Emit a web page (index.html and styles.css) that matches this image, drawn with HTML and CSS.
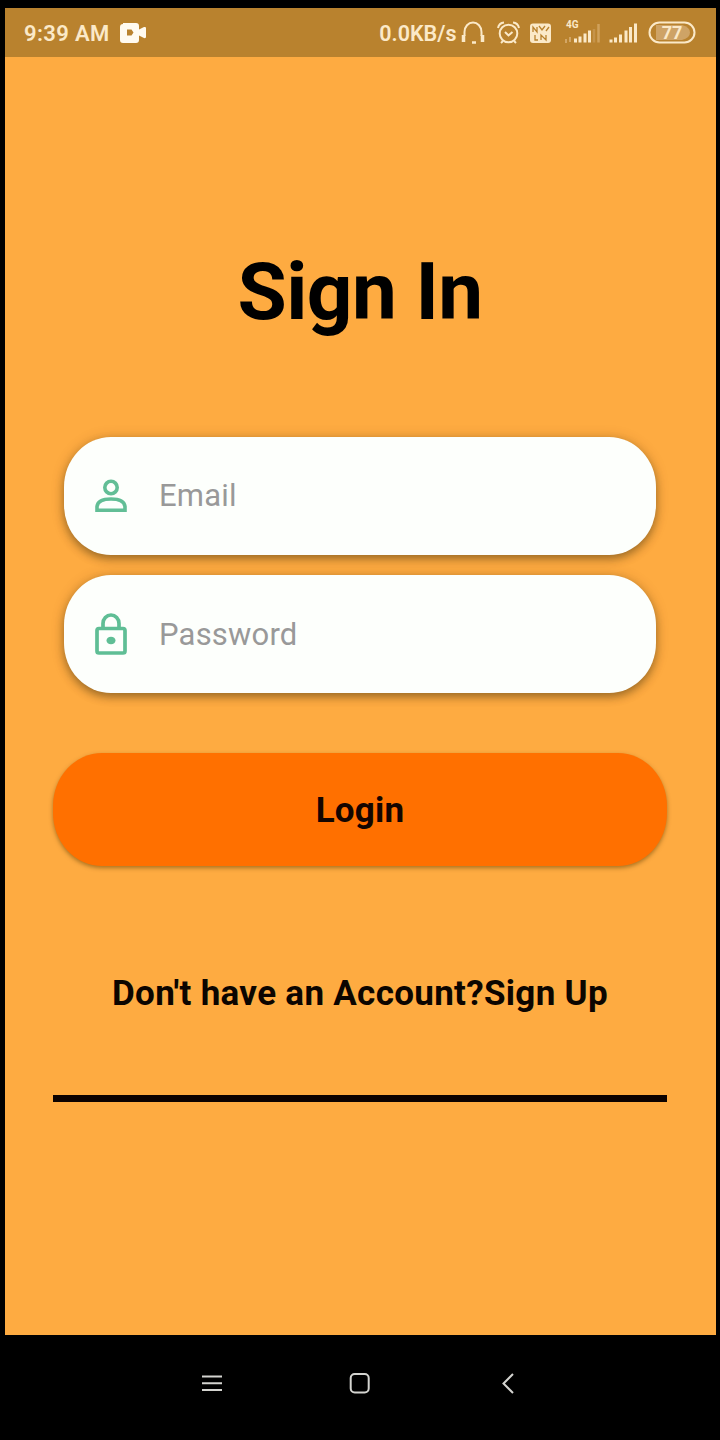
FILE: index.html
```html
<!DOCTYPE html>
<html lang="en">
<head>
<meta charset="utf-8">
<title>Sign In</title>
<link rel="stylesheet" href="styles.css">
</head>
<body>
<div class="screen">
  <header class="status">
    <span class="clock">9:39 AM</span>
    <svg class="camera" width="27" height="20" viewBox="0 0 27 20"><path fill="#fffaf0" fill-rule="evenodd" d="M3 0h13q3 0 3 3v3.500l5-2.500q2-.5 2 1v9q0 1.500-2 1l-5-2.500v4.500q0 3-3 3h-13q-3 0-3-3v-13q0-3 3-3zM7 6.500v6h4.500l2-3-2-3z"/></svg>
    <span class="speed">0.0KB/s</span>
    <svg class="status-icons" width="240" height="48" viewBox="0 0 240 48" fill="none" stroke="#fbe9c8" stroke-width="2">
      <path d="M4.500 28V24a8.500 9.500 0 0 1 17 0V28"/>
      <path d="M3.500 27v7M22.500 27v7" stroke-width="3.500"/>
      <path d="M12 34.500h4" stroke-width="2.500"/>
      <circle cx="48.500" cy="25.500" r="8.800"/>
      <path d="M45 24l3.500 3.500 4-3.500M38 20q1-5 6-5.500M59 20q-1-5-6-5.500M43 33l-2 2M54 33l2 2"/>
      <rect x="70" y="15.500" width="21" height="19.500" rx="3" fill="#fbe9c8" stroke="none"/>
      <path d="M73 24v-5l4 5v-5M79 18l3 4 3-4M75 27v5h3M81 32v-5l5 5v-5M86 23l3-4" stroke="#b9822e" stroke-width="1.300"/>
      <path d="M106 35v-4M110 34v-5" stroke="#d3a665"/>
      <path d="M115.500 34.500v-4M120 34.500v-6M125 34.500v-9M129.500 34.500v-12" stroke-width="3"/>
      <path d="M134 34.500V21" stroke="#c5934a" stroke-width="2.500"/>
      <path d="M138.500 34.500V16" stroke="#d0a15b" stroke-width="2.500"/>
      <path d="M151 34.500v-3M155.500 34.500v-5M160.500 34.500v-8M166 34.500v-12M175.500 34.500V15.500" stroke-width="3"/>
      <path d="M170.500 34.500V19" stroke-width="3"/>
      <path d="M196 17h26q8 2 8 7.500t-8 7.500h-26z" fill="#cea366" stroke="none"/>
      <rect x="189.500" y="14.500" width="45" height="20" rx="10"/>
      <text class="net" x="106" y="20">4G</text>
      <text class="battery" x="212" y="31" text-anchor="middle">77</text>
    </svg>
  </header>
  <main class="content">
    <h1 class="title">Sign In</h1>
    <form class="fields">
      <label class="field">
        <svg class="icon" viewBox="0 0 32 44" fill="none" stroke="#62be96" stroke-width="3.600"><circle cx="16" cy="13.500" r="6.200"/><path d="M2 36.200v-3.700q1-7.500 14-7.500t14 7.500v3.700z"/></svg>
        <span class="hint">Email</span>
      </label>
      <label class="field">
        <svg class="icon" viewBox="0 0 32 44" fill="none" stroke="#5fbe95" stroke-width="3.700"><rect x="2" y="16.500" width="28" height="24.500" rx="2"/><path d="M8 16v-4.500a8 8.500 0 0 1 16 0v4.500"/><ellipse cx="16" cy="28.500" rx="4.500" ry="3.800" fill="#5fbe95" stroke="none"/></svg>
        <span class="hint">Password</span>
      </label>
    </form>
    <div class="login"><span>Login</span></div>
    <p class="signup">Don't have an Account?Sign Up</p>
    <div class="rule"></div>
  </main>
</div>
<nav class="nav">
  <svg width="22" height="22" viewBox="0 0 22 22"><path d="M1 4.500h20M1 11.200h20M1 17.900h20" stroke="#d4d4d0" stroke-width="2"/></svg>
  <svg width="22" height="22" viewBox="0 0 22 22"><rect x="1.700" y="2" width="18" height="18.500" rx="4" fill="none" stroke="#d4d4d0" stroke-width="2"/></svg>
  <svg width="22" height="22" viewBox="0 0 22 22"><path d="M16 2L6.500 11.500l9.500 9.500" fill="none" stroke="#d4d4d0" stroke-width="2"/></svg>
</nav>
</body>
</html>
```
FILE: styles.css
```css
* { box-sizing: border-box; }
body {
  margin: 0;
  width: 720px;
  height: 1440px;
  padding: 8px 4.5px 0;
  background: #000;
  font-family: Roboto, "Liberation Sans", sans-serif;
  overflow: hidden;
}
.screen { height: 1327px; background: #feab41; }
.status {
  display: flex;
  align-items: center;
  height: 48.5px;
  padding: 0 16px 0 19.5px;
  background: #b9822e;
  color: #fbe9c8;
}
.clock { width: 86px; margin-top: 3px; font-size: 22px; font-weight: 600; letter-spacing: 0.35px; white-space: nowrap; }
.camera { margin: 2px 0 0 10px; }
.speed { margin: 3px 0 0 auto; font-size: 21.5px; font-weight: 600; white-space: nowrap; }
.status-icons { flex: none; margin-left: 3px; }
.net { font-size: 10px; font-weight: 700; fill: #fbe9c8; stroke: none; }
.battery { font-size: 18px; font-weight: 700; fill: #fbe9c8; stroke: none; }
.content { padding: 188px 48.5px 0; }
.title {
  margin: 0;
  height: 94px;
  line-height: 94px;
  text-align: center;
  font-size: 80px;
  font-weight: 700;
  letter-spacing: -0.6px;
  color: #000;
}
.fields { display: flex; flex-direction: column; gap: 20.5px; margin: 98px 11px 0; }
.field {
  display: flex;
  align-items: center;
  height: 118px;
  padding-left: 31px;
  border-radius: 47px / 50px;
  background: #fdfffc;
  box-shadow: 0 4px 8px rgba(60, 45, 15, .42), 0 1px 14px rgba(80, 50, 0, .2);
}
.icon { width: 32px; height: 44px; }
.hint { margin-left: 32px; font-size: 31px; letter-spacing: 0.2px; color: #999; }
.login {
  display: flex;
  align-items: center;
  justify-content: center;
  height: 113px;
  margin-top: 60px;
  padding-top: 2px;
  border-radius: 49px / 53px;
  background: #ff7000;
  box-shadow: 0 2px 4px rgba(90, 60, 0, .5);
  font-size: 35px;
  font-weight: 700;
  letter-spacing: 0.2px;
  color: #140500;
}
.signup {
  margin: 107px 0 0;
  height: 42px;
  line-height: 42px;
  text-align: center;
  font-size: 35px;
  font-weight: 700;
  letter-spacing: 0.3px;
  color: #0c0500;
  white-space: nowrap;
}
.rule { height: 7px; margin-top: 79.5px; background: #0c0200; }
.nav { display: flex; justify-content: center; gap: 126px; padding-top: 37px; }
```
